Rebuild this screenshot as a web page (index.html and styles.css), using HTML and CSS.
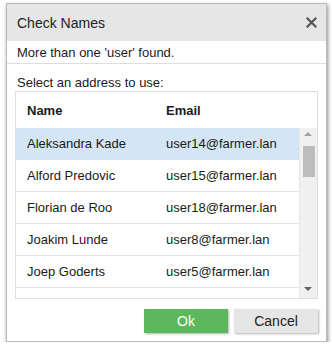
FILE: index.html
```html
<!DOCTYPE html>
<html lang="en">
<head>
  <meta charset="UTF-8" />
  <title>Check Names</title>
  <link rel="stylesheet" href="styles.css">
</head>
<body>
  <div class="dialog">
    <div class="dialog-header">
      <span class="dialog-title">Check Names</span>
      <button class="close-btn" aria-label="Close">
        <svg width="11" height="11" viewBox="0 0 11 11">
          <path d="M1.5 1.5 L9.5 9.5 M9.5 1.5 L1.5 9.5" stroke="#555" stroke-width="2.2" stroke-linecap="square"/>
        </svg>
      </button>
    </div>

    <div class="dialog-message">More than one 'user' found.</div>

    <div class="dialog-body">
      <div class="select-label">Select an address to use:</div>

      <div class="grid">
        <div class="grid-head">
          <div class="col-name">Name</div>
          <div class="col-email">Email</div>
        </div>
        <div class="grid-content">
          <div class="grid-rows">
            <div class="row selected">
              <div class="col-name">Aleksandra Kade</div>
              <div class="col-email">user14@farmer.lan</div>
            </div>
            <div class="row">
              <div class="col-name">Alford Predovic</div>
              <div class="col-email">user15@farmer.lan</div>
            </div>
            <div class="row">
              <div class="col-name">Florian de Roo</div>
              <div class="col-email">user18@farmer.lan</div>
            </div>
            <div class="row">
              <div class="col-name">Joakim Lunde</div>
              <div class="col-email">user8@farmer.lan</div>
            </div>
            <div class="row">
              <div class="col-name">Joep Goderts</div>
              <div class="col-email">user5@farmer.lan</div>
            </div>
            <div class="row"></div>
          </div>
          <div class="scrollbar">
            <span class="arrow-up"></span>
            <span class="thumb"></span>
            <span class="arrow-down"></span>
          </div>
        </div>
      </div>
    </div>

    <div class="dialog-footer">
      <button class="btn btn-ok">Ok</button>
      <button class="btn btn-cancel">Cancel</button>
    </div>
  </div>
</body>
</html>
```

FILE: styles.css
```css
body {
  margin: 0;
  background: white;
  font-family: "Liberation Sans", Arial, sans-serif;
  font-size: 13px;
  color: #1a1a1a;
}

.dialog {
  margin: 3px 0 0 6px;
  width: 319px;
  height: 337px;
  border: 1px solid #b9b9b9;
  background: white;
  box-shadow: 1px 2px 4px rgba(0,0,0,0.45);
  display: flex;
  flex-direction: column;
}

.dialog-header {
  height: 37px;
  background: #e6e6e6;
  display: flex;
  align-items: center;
  justify-content: space-between;
  padding: 0 10px;
}

.dialog-title {
  font-size: 14px;
  color: #222;
}

.close-btn {
  background: none;
  border: none;
  padding: 0;
  margin-right: -1px;
  display: flex;
  cursor: pointer;
}

.dialog-message {
  height: 20px;
  line-height: 20px;
  padding: 2px 10px 0;
  border-bottom: 1px solid #dedede;
}

.dialog-body {
  padding: 0 8px;
}

.select-label {
  padding: 11px 2px 0;
  line-height: 15px;
  height: 15px;
}

.grid {
  margin-top: 1px;
  border: 1px solid #dedede;
  height: 206px;
  display: flex;
  flex-direction: column;
}

.grid-head {
  height: 36px;
  display: flex;
  align-items: center;
  font-weight: bold;
  flex-shrink: 0;
}

.col-name {
  width: 139px;
  padding-left: 11px;
}

.col-email {
  flex: 1;
}

.grid-content {
  flex: 1;
  display: flex;
  overflow: hidden;
}

.grid-rows {
  flex: 1;
  overflow: hidden;
}

.row {
  height: 31px;
  display: flex;
  align-items: center;
  border-bottom: 1px solid #e3e3e3;
}

.row.selected {
  background: #d4e5f5;
  border-bottom-color: #d4e5f5;
}

.scrollbar {
  width: 17px;
  background: #f0f0f0;
  border-left: 1px solid #e6e6e6;
  position: relative;
  flex-shrink: 0;
}

.arrow-up,
.arrow-down {
  position: absolute;
  left: 4px;
  width: 0;
  height: 0;
  border-left: 4px solid transparent;
  border-right: 4px solid transparent;
}

.arrow-up {
  top: 4px;
  border-bottom: 4px solid #a3a3a3;
}

.arrow-down {
  bottom: 7px;
  border-top: 4px solid #606060;
}

.thumb {
  position: absolute;
  left: 3px;
  top: 18px;
  width: 12px;
  height: 31px;
  background: #bdbdbd;
}

.dialog-footer {
  display: flex;
  justify-content: flex-end;
  gap: 6px;
  padding: 10px 8px 0;
}

.btn {
  width: 84px;
  height: 24px;
  border: none;
  font-family: "Liberation Sans", Arial, sans-serif;
  font-size: 14px;
  cursor: pointer;
  box-shadow: 1px 1px 2px rgba(0,0,0,0.3);
}

.btn-ok {
  background: #5cb85c;
  color: white;
}

.btn-cancel {
  background: #e6e6e6;
  color: #222;
}
```
